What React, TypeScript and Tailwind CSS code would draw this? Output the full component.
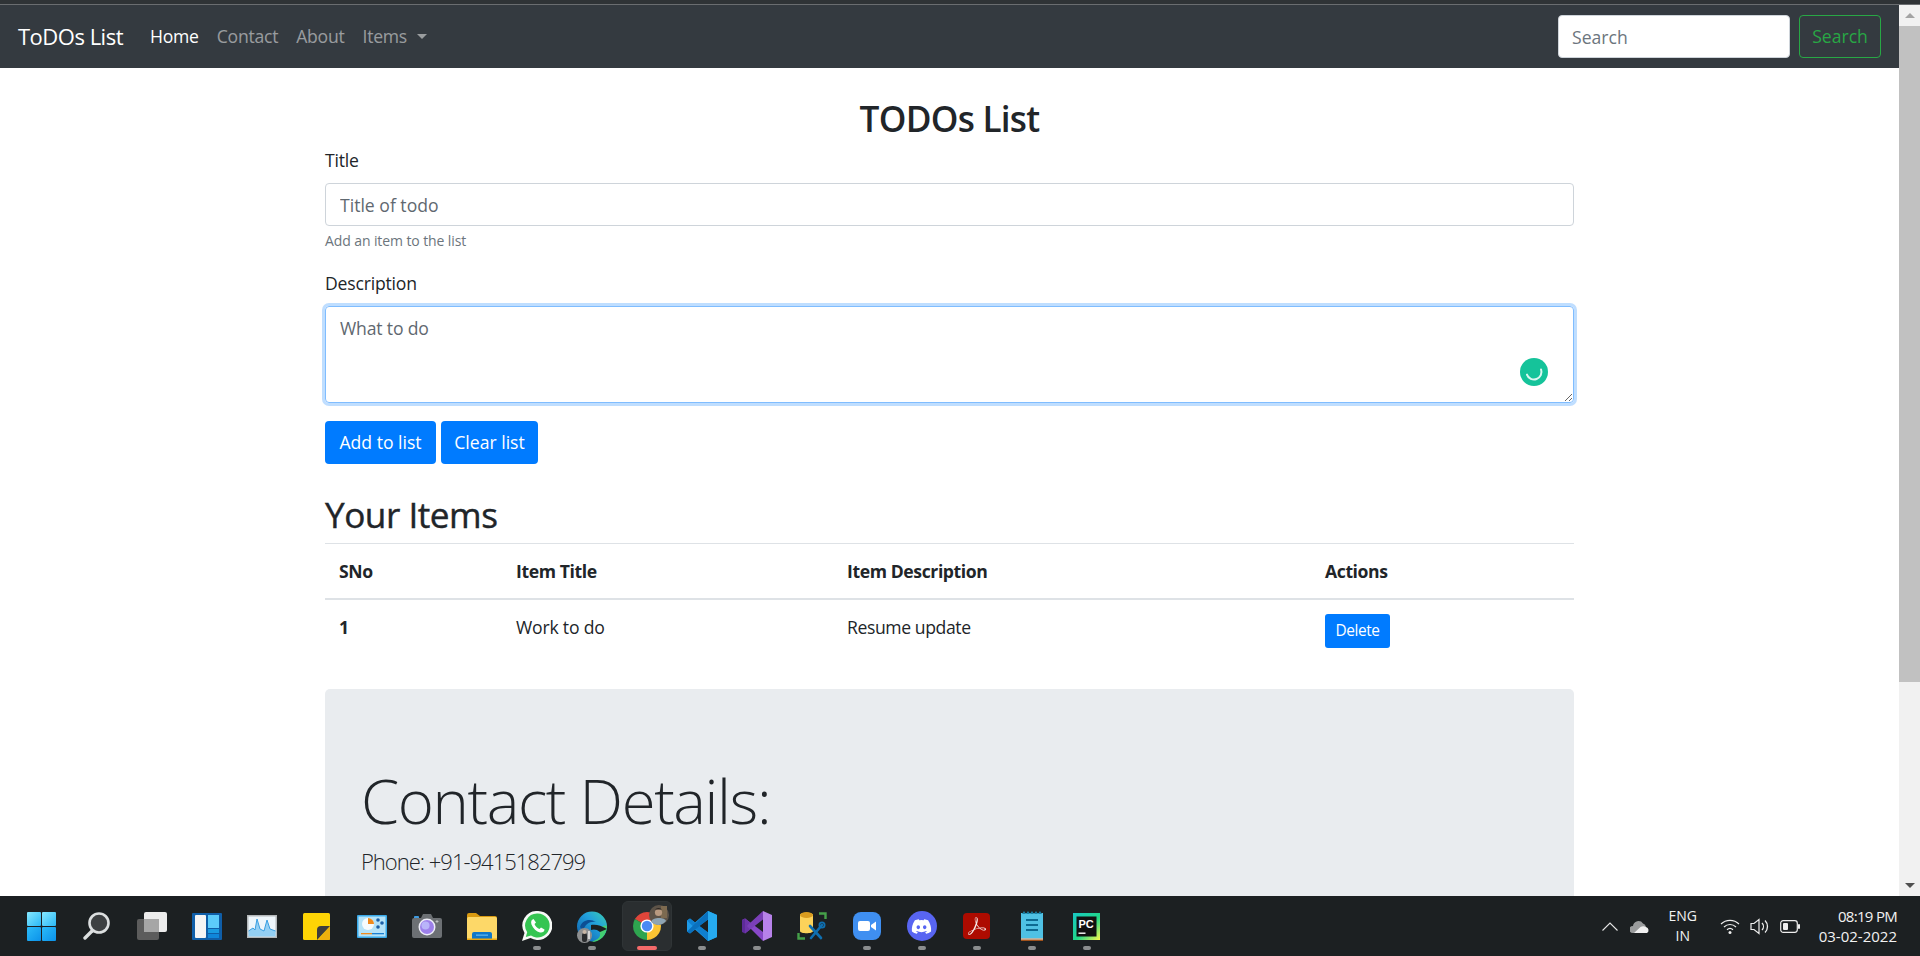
import type { ReactNode } from "react";
import { FaDiscord } from "react-icons/fa";
import { SiAdobeacrobatreader } from "react-icons/si";

const font = "font-['Open_Sans','Noto_Sans',sans-serif]";

function Slot({ children, dot, active }: { children: ReactNode; dot?: boolean; active?: boolean }) {
  return (
    <div className="relative flex h-[60px] w-[55px] items-center justify-center">
      {active && <span className="absolute left-[3px] top-[5px] h-[50px] w-[50px] rounded-md border border-[#2f3436] bg-[#2a2e30]" />}
      <div className="relative flex">{children}</div>
      {dot && <span className="absolute bottom-[6px] left-1/2 h-[4px] w-[8px] -translate-x-1/2 rounded-full bg-[#8b8d8e]" />}
      {active && <span className="absolute bottom-[6px] left-1/2 h-[4px] w-[20px] -translate-x-1/2 rounded-full bg-[#f56a6a]" />}
    </div>
  );
}

function Windows() {
  return (
    <svg width="29" height="29" viewBox="0 0 29 29">
      <defs>
        <linearGradient id="w1" x1="0" y1="0" x2="1" y2="1"><stop offset="0" stopColor="#86e8ff" /><stop offset="1" stopColor="#2ab8f6" /></linearGradient>
        <linearGradient id="w2" x1="0" y1="0" x2="1" y2="1"><stop offset="0" stopColor="#2bbbf8" /><stop offset="1" stopColor="#0b92ea" /></linearGradient>
      </defs>
      <rect width="14" height="14" rx="1" fill="url(#w1)" />
      <rect x="15" width="14" height="14" rx="1" fill="url(#w1)" />
      <rect y="15" width="14" height="14" rx="1" fill="url(#w2)" />
      <rect x="15" y="15" width="14" height="14" rx="1" fill="url(#w2)" />
    </svg>
  );
}

function SearchIcon() {
  return (
    <svg width="27" height="28" viewBox="0 0 27 28">
      <circle cx="16" cy="11" r="9.5" fill="#3d4042" stroke="#dcdfe0" strokeWidth="2.6" />
      <path d="M9 19 L2 26" stroke="#dcdfe0" strokeWidth="3.4" strokeLinecap="round" />
    </svg>
  );
}

function TaskView() {
  return (
    <svg width="30" height="28" viewBox="0 0 30 28">
      <rect x="7" y="0" width="23" height="20" rx="2" fill="#ececec" />
      <rect x="0" y="7" width="22" height="21" rx="2" fill="#5c5c5c" />
      <rect x="7" y="7" width="15" height="13" fill="#a6a6a6" />
    </svg>
  );
}

function Widgets() {
  return (
    <svg width="30" height="27" viewBox="0 0 30 27">
      <rect width="30" height="27" rx="1" fill="#0f5ea8" />
      <rect x="3" y="2" width="11" height="23" rx="1" fill="#f4f4f4" />
      <rect x="16" y="2" width="11" height="13" fill="#5ccbfa" />
      <rect x="16" y="16" width="11" height="4" fill="#199be2" />
      <rect x="16" y="21" width="11" height="4" fill="#0f86da" />
    </svg>
  );
}

function PerfMon() {
  return (
    <svg width="30" height="23" viewBox="0 0 30 23">
      <rect width="30" height="23" fill="#b4b8ba" />
      <rect x="1.5" y="1.5" width="27" height="20" fill="#eef6fb" />
      <path d="M1.5 16 L6 13 L8 15 L10 4 L13 14 L17 16 L20 5 L23 14 L28.5 16 V21.5 H1.5 Z" fill="#93cff3" />
      <path d="M1.5 16 L6 13 L8 15 L10 4 L13 14 L17 16 L20 5 L23 14 L28.5 16" fill="none" stroke="#3a9fe2" strokeWidth="1" />
    </svg>
  );
}

function Sticky() {
  return (
    <svg width="27" height="27" viewBox="0 0 27 27">
      <rect width="27" height="27" rx="1.5" fill="#fdd405" />
      <path d="M27 13 V25.5 A1.5 1.5 0 0 1 25.5 27 H15 Z" fill="#eeb00e" />
      <path d="M14 27 V17 A4 4 0 0 1 18 13 H27 L14 27 Z" fill="#3d3d3d" />
    </svg>
  );
}

function ControlPanel() {
  return (
    <svg width="30" height="23" viewBox="0 0 30 23">
      <rect width="30" height="23" rx="1" fill="#39a9e8" />
      <rect x="1.5" y="1.5" width="27" height="20" fill="#b4e2f8" />
      <circle cx="11" cy="9" r="6" fill="#f6fbfe" />
      <path d="M11 3 A6 6 0 0 1 17 9 H11 Z" fill="#f08a1d" />
      <circle cx="21" cy="5" r="1.8" fill="#1c5fa8" />
      <circle cx="25" cy="8" r="1.8" fill="#1c5fa8" />
      <circle cx="21" cy="12" r="1.8" fill="#1c5fa8" />
      <rect x="4" y="18" width="11" height="1.3" fill="#f08a1d" />
      <rect x="15" y="18" width="12" height="1.3" fill="#1c7fd1" />
    </svg>
  );
}

function Camera() {
  return (
    <svg width="30" height="24" viewBox="0 0 30 24">
      <rect x="2" y="2" width="5" height="3" rx="1" fill="#3e9be0" />
      <path d="M9 4 L11 0 H19 L21 4 H28 A2 2 0 0 1 30 6 V22 A2 2 0 0 1 28 24 H2 A2 2 0 0 1 0 22 V6 A2 2 0 0 1 2 4 Z" fill="#6c7074" />
      <circle cx="15" cy="13" r="8.5" fill="#eeeef8" />
      <circle cx="15" cy="13" r="7" fill="#9d80ea" />
      <circle cx="13.5" cy="11.5" r="4" fill="#b9b4f9" />
      <path d="M25 6 V9 M23.5 7.5 H26.5" stroke="#c9cbcd" strokeWidth="0.8" />
    </svg>
  );
}

function Folder() {
  return (
    <svg width="30" height="27" viewBox="0 0 30 27">
      <path d="M0 2 A2 2 0 0 1 2 0 H9 L13 3 H28 A2 2 0 0 1 30 5 V8 H0 Z" fill="#d99a11" />
      <rect y="4" width="30" height="23" rx="1.5" fill="#fdd868" />
      <path d="M5 27 V21 A2 2 0 0 1 7 19 H23 A2 2 0 0 1 25 21 V27 Z" fill="#0f77c9" />
      <rect x="9" y="21.5" width="12" height="1.3" fill="#5db5ef" />
      <rect y="25.5" width="30" height="1.5" fill="#e9a70f" />
    </svg>
  );
}

function Whatsapp() {
  return (
    <svg width="30" height="30" viewBox="0 0 30 30">
      <path d="M15.5 0 A14.5 14.5 0 1 1 8.5 27 L0 30 L2.5 22 A14.5 14.5 0 0 1 15.5 0 Z" fill="#f7f9f7" />
      <path d="M15.5 2.5 A12 12 0 1 1 9 24.5 L3.8 26 L5.2 21.2 A12 12 0 0 1 15.5 2.5 Z" fill="#35c552" />
      <path d="M11.5 8 C9.5 8.5 8.5 10.5 9.5 13.5 C11 17.5 14.5 20.5 18 21.5 C20.5 22 22.5 20.5 22.5 18.5 L19 16.5 L17.5 18 C15.5 17.5 13 15 12.5 13 L14 11.5 Z" fill="#fff" />
    </svg>
  );
}

function Edge() {
  return (
    <div className="relative h-[31px] w-[30px]">
      <svg width="30" height="31" viewBox="0 0 30 31">
        <defs>
          <linearGradient id="e1" x1="0" y1="1" x2="1" y2="0"><stop offset="0" stopColor="#0b5aa8" /><stop offset="0.6" stopColor="#22a0dc" /><stop offset="1" stopColor="#3bd0b0" /></linearGradient>
        </defs>
        <circle cx="15" cy="15.5" r="15" fill="url(#e1)" />
        <path d="M30 15 C30 24 23 31 15 31 C18 29 24 28 23 22 C22 18 26 13 30 15 Z" fill="#43cf72" />
        <path d="M14 14 C18 13 24 14 30 18 L23 21 C20 18 16 18 14 19 Z" fill="#1c2022" />
        <path d="M3 16 C5 9 13 7 19 11 C13 10 8 13 6 20 Z" fill="#0d4f94" />
      </svg>
      <svg width="15" height="15" viewBox="0 0 15 15" className="absolute -bottom-[1px] left-0">
        <circle cx="7.5" cy="7.5" r="7.5" fill="#8d8f90" />
        <rect x="5" y="5" width="5" height="9" rx="2" fill="#2a2c2e" />
        <circle cx="7.5" cy="4" r="2" fill="#c9b7a6" />
        <rect x="11" y="3" width="2" height="8" fill="#d5d5d5" />
      </svg>
    </div>
  );
}

function Chrome() {
  return (
    <div className="relative h-[28px] w-[28px]">
      <svg width="28" height="28" viewBox="0 0 28 28">
        <path d="M14 14 L1.88 7 A14 14 0 0 1 26.12 7 Z" fill="#e0453a" />
        <path d="M14 14 L26.12 7 A14 14 0 0 1 14 28 Z" fill="#fbc433" />
        <path d="M14 14 L14 28 A14 14 0 0 1 1.88 7 Z" fill="#2ea44f" />
        <circle cx="14" cy="14" r="6.6" fill="#fff" />
        <circle cx="14" cy="14" r="5.2" fill="#4a8af4" />
      </svg>
      <svg width="20" height="20" viewBox="0 0 20 20" className="absolute -right-[8px] -top-[7px]">
        <circle cx="10" cy="10" r="10" fill="#5d5348" />
        <rect x="12" y="1" width="6" height="12" fill="#7d6a50" />
        <circle cx="9.5" cy="7.5" r="3.6" fill="#b99a80" />
        <path d="M6 4.5 A4 3 0 0 1 13 4.5 Z" fill="#2c2622" />
        <path d="M2 17 C3 12 16 12 17 16 A10 10 0 0 1 2 17 Z" fill="#8ea4b3" />
      </svg>
    </div>
  );
}

function VsCode() {
  return (
    <svg width="30" height="30" viewBox="0 0 30 30">
      <path d="M21 30 L8 18.5 L3 22.5 L0 20.5 V9.5 L3 7.5 L8 11.5 L21 0 L30 4 V26 Z M21 8.5 L12 15 L21 21.5 Z" fill="#1e9be8" />
      <path d="M21 0 L30 4 V26 L21 30 Z" fill="#26aaef" />
      <path d="M0 9.5 L3 7.5 L21 21.5 V30 Z" fill="#0f7fcf" />
      <path d="M0 20.5 L21 0 V8.5 L3 22.5 Z" fill="#0a70bd" />
    </svg>
  );
}

function VisualStudio() {
  return (
    <svg width="30" height="30" viewBox="0 0 30 30">
      <path d="M21 0 L30 4 V26 L21 30 Z" fill="#b782ea" />
      <path d="M0 9 L3 7.5 L21 21 V30 Z" fill="#8848c8" />
      <path d="M3 22.5 L21 8.5 V0 L8 12 L3 7.5 Z" fill="#7a3fb8" />
      <path d="M0 9 L3 7.5 V22.5 L0 21 Z" fill="#5d2b99" />
      <path d="M3 7.5 L8 11.5 L5 15 L8 18.5 L3 22.5 Z" fill="#6d34aa" />
    </svg>
  );
}

function DbTool() {
  return (
    <svg width="30" height="28" viewBox="0 0 30 28">
      <path d="M3 3 C3 0 16 0 16 3 V19 C16 22 3 22 3 19 Z" fill="#fcd25a" />
      <ellipse cx="9.5" cy="3" rx="6.5" ry="3" fill="#d99c1f" />
      <path d="M22 1.5 H28.5 V7 M1.5 21 V26.5 H8" fill="none" stroke="#45a049" strokeWidth="2.4" />
      <path d="M13 14 L24 26 M25 13 L14 26" stroke="#0f6fb0" strokeWidth="2.6" strokeLinecap="round" />
      <circle cx="25" cy="13" r="2.6" fill="none" stroke="#0f6fb0" strokeWidth="1.8" />
    </svg>
  );
}

function ZoomApp() {
  return (
    <svg width="28" height="28" viewBox="0 0 28 28">
      <rect width="28" height="28" rx="8" fill="#3f8ff1" />
      <rect x="5" y="9" width="12" height="10" rx="2" fill="#fff" />
      <path d="M18 13 L23 9.5 V18.5 L18 15 Z" fill="#fff" />
    </svg>
  );
}

function Discord() {
  return (
    <div className="flex h-[30px] w-[30px] items-center justify-center rounded-full bg-[#5865f2] text-white">
      <FaDiscord size={21} />
    </div>
  );
}

function Acrobat() {
  return (
    <div className="flex h-[26px] w-[27px] items-center justify-center rounded-[4px] bg-[#ad0b00] text-[#f6ecea]">
      <SiAdobeacrobatreader size={18} />
    </div>
  );
}

function Notepad() {
  return (
    <svg width="22" height="30" viewBox="0 0 22 30">
      <rect y="2" width="22" height="28" fill="#a0521c" />
      <rect y="2" width="22" height="25.5" fill="#4fc1e4" />
      <rect y="27.5" width="22" height="1" fill="#f0e6da" />
      <path d="M1 3 L3 0 L5 3 L7 0 L9 3 L11 0 L13 3 L15 0 L17 3 L19 0 L21 3 Z" fill="#1b7fa3" />
      <rect x="5" y="8" width="12" height="2" fill="#0d6a92" />
      <rect x="5" y="13" width="12" height="2" fill="#0d6a92" />
      <rect x="5" y="18" width="12" height="2" fill="#0d6a92" />
    </svg>
  );
}

function PyCharm() {
  return (
    <svg width="27" height="27" viewBox="0 0 27 27">
      <defs>
        <linearGradient id="pc" x1="0" y1="0" x2="1" y2="1"><stop offset="0" stopColor="#18c8c4" /><stop offset="0.55" stopColor="#21d789" /><stop offset="1" stopColor="#fcf84a" /></linearGradient>
      </defs>
      <rect width="27" height="27" fill="url(#pc)" />
      <rect x="3.5" y="3.5" width="20" height="20" fill="#111" />
      <rect x="5.5" y="19.5" width="7" height="1.4" fill="#fff" />
      <text x="5.5" y="14.5" fontSize="11" fontWeight="700" fill="#fff" fontFamily="Liberation Sans, sans-serif">PC</text>
    </svg>
  );
}

function Taskbar() {
  return (
    <div className={`flex h-[60px] shrink-0 items-center bg-[#1c2022] pl-[14px] ${font}`}>
      <div className="flex">
        <Slot><Windows /></Slot>
        <Slot><SearchIcon /></Slot>
        <Slot><TaskView /></Slot>
        <Slot><Widgets /></Slot>
        <Slot><PerfMon /></Slot>
        <Slot><Sticky /></Slot>
        <Slot><ControlPanel /></Slot>
        <Slot><Camera /></Slot>
        <Slot><Folder /></Slot>
        <Slot dot><Whatsapp /></Slot>
        <Slot dot><Edge /></Slot>
        <Slot active><Chrome /></Slot>
        <Slot dot><VsCode /></Slot>
        <Slot dot><VisualStudio /></Slot>
        <Slot><DbTool /></Slot>
        <Slot dot><ZoomApp /></Slot>
        <Slot dot><Discord /></Slot>
        <Slot dot><Acrobat /></Slot>
        <Slot dot><Notepad /></Slot>
        <Slot dot><PyCharm /></Slot>
      </div>
      <div className="ml-auto flex items-center pr-[23px] text-[#f2f2f2]">
        <svg width="16" height="9" viewBox="0 0 16 9" className="mr-[12px]">
          <path d="M0.5 8.5 L8 1 L15.5 8.5" fill="none" stroke="#e6e6e6" strokeWidth="1.1" />
        </svg>
        <svg width="20" height="13" viewBox="0 0 20 13" className="mr-[18px]">
          <path d="M3 13 A3.4 3.4 0 0 1 3 6 A5.5 5.5 0 0 1 13 3.5 A4.5 4.5 0 0 1 16 7 L7 13 Z" fill="#9a9c9d" />
          <path d="M4 13 L10.5 7 A5.5 5.5 0 0 1 16 7 A3.3 3.3 0 0 1 17 13 Z" fill="#f0f0f0" />
        </svg>
        <div className="mr-[22px] flex w-[30px] flex-col items-center text-[14px] leading-[20px]">
          <span>ENG</span>
          <span>IN</span>
        </div>
        <svg width="20" height="15" viewBox="0 0 20 15" className="mr-[10px]">
          <path d="M1 5 A13 13 0 0 1 19 5 M4 8 A8.5 8.5 0 0 1 16 8 M7 10.8 A4.4 4.4 0 0 1 13 10.8" fill="none" stroke="#eeeeee" strokeWidth="1.2" />
          <circle cx="10" cy="13.4" r="1.5" fill="#eeeeee" />
        </svg>
        <svg width="20" height="17" viewBox="0 0 20 17" className="mr-[10px]">
          <path d="M1 5.5 H4 L9 1.5 V15.5 L4 11.5 H1 Z" fill="none" stroke="#eeeeee" strokeWidth="1.2" />
          <path d="M12 5 A5 5 0 0 1 12 12 M15 2.5 A8.5 8.5 0 0 1 15 14.5" fill="none" stroke="#eeeeee" strokeWidth="1.3" />
        </svg>
        <svg width="20" height="13" viewBox="0 0 20 13" className="mr-[19px]">
          <rect x="0.7" y="0.7" width="16.6" height="11.6" rx="2.5" fill="none" stroke="#eeeeee" strokeWidth="1.2" />
          <rect x="3" y="3" width="5" height="7" rx="1" fill="#eeeeee" />
          <rect x="18" y="4" width="2" height="5" rx="1" fill="#eeeeee" />
        </svg>
        <div className="flex flex-col items-end text-[15px] leading-[20px]">
          <span className="tracking-[-0.7px]">08:19 PM</span>
          <span>03-02-2022</span>
        </div>
      </div>
    </div>
  );
}

function Navbar() {
  return (
    <nav className="flex h-[63px] shrink-0 items-center bg-[#343a40] px-[18px]">
      <span className="mr-[27px] text-[22px] tracking-[-0.5px] text-white">ToDOs List</span>
      <div className="flex items-center gap-[18px] text-[17.6px] tracking-[-0.25px] text-white/50">
        <span className="text-white">Home</span>
        <span>Contact</span>
        <span>About</span>
        <span className="flex items-center gap-[10px]">
          Items
          <span className="mt-[1px] h-0 w-0 border-x-[5px] border-t-[5px] border-x-transparent border-t-[#9a9d9f]" />
        </span>
      </div>
      <div className="ml-auto flex items-center gap-[9px]">
        <input
          placeholder="Search"
          className="h-[43px] w-[232px] rounded-[4px] border border-[#ced4da] bg-white px-[13px] text-[17.6px] text-[#495057] outline-none placeholder:text-[#6c757d]"
        />
        <button className="h-[43px] w-[82px] rounded-[4px] border border-[#28a745] text-[17.6px] text-[#28a745]">Search</button>
      </div>
    </nav>
  );
}

function Scrollbar() {
  return (
    <div className="flex w-[21px] shrink-0 flex-col bg-[#f1f1f1]">
      <div className="flex h-[21px] items-center justify-center">
        <span className="h-0 w-0 border-x-[5px] border-b-[5px] border-x-transparent border-b-[#a3a3a3]" />
      </div>
      <div className="h-[656px] bg-[#c1c1c1]" />
      <div className="flex-1" />
      <div className="flex h-[21px] items-center justify-center">
        <span className="h-0 w-0 border-x-[5px] border-t-[5px] border-x-transparent border-t-[#505050]" />
      </div>
    </div>
  );
}

function Content() {
  return (
    <main className="mx-auto w-[1249px] shrink-0 text-[17.6px] tracking-[-0.2px] text-[#212529]">
      <h2 className="mt-[29px] text-center text-[35.2px] font-semibold leading-[42px] tracking-[-0.75px]">TODOs List</h2>
      <label className="mt-[8px] block leading-[26px]">Title</label>
      <input
        placeholder="Title of todo"
        className="mt-[10px] block h-[43px] w-full rounded-[4px] border border-[#ced4da] px-[14px] text-[17.6px] tracking-normal outline-none placeholder:text-[#5f6870]"
      />
      <p className="mt-[4px] text-[14px] leading-[22px] tracking-[-0.1px] text-[#6c757d]">Add an item to the list</p>
      <label className="mt-[18px] block leading-[26px]">Description</label>
      <textarea
        placeholder="What to do"
        className="mt-[10px] block h-[97px] w-full rounded-[4px] border border-[#80bdff] px-[14px] py-[8px] text-[17.6px] tracking-[-0.17px] shadow-[0_0_0_3px_rgba(0,123,255,0.25)] outline-none placeholder:text-[#5f6870]"
      />
      <div className="relative">
        <svg width="28" height="28" viewBox="0 0 28 28" className="absolute -top-[45px] right-[26px]">
          <circle cx="14" cy="14" r="14" fill="#15c39a" />
          <path d="M6.5 14 A7.5 7.5 0 0 0 21.5 14" transform="rotate(-20 14 14)" fill="none" stroke="#fff" strokeOpacity="0.85" strokeWidth="2" strokeLinecap="round" />
        </svg>
      </div>
      <div className="mt-[18px] flex gap-[5px]">
        <button className="h-[43px] w-[111px] rounded-[4px] bg-[#007bff] tracking-normal text-white">Add to list</button>
        <button className="h-[43px] w-[97px] rounded-[4px] bg-[#007bff] tracking-normal text-white">Clear list</button>
      </div>
      <h2 className="mt-[29px] text-[35.2px] font-medium leading-[42px] tracking-[-0.5px] [-webkit-text-stroke:0.4px_#212529]">Your Items</h2>
      <table className="mt-[8px] w-full table-fixed border-collapse">
        <thead>
          <tr className="border-y border-[#dee2e6] text-left tracking-[-0.4px]">
            <th className="h-[55px] w-[179px] border-b-2 border-[#dee2e6] px-[14px] font-bold">SNo</th>
            <th className="w-[331px] border-b-2 border-[#dee2e6] px-[12px] font-bold">Item Title</th>
            <th className="w-[478px] border-b-2 border-[#dee2e6] px-[12px] font-bold">Item Description</th>
            <th className="border-b-2 border-[#dee2e6] px-[12px] font-bold">Actions</th>
          </tr>
        </thead>
        <tbody>
          <tr>
            <th className="h-[57px] px-[14px] text-left font-bold">1</th>
            <td className="px-[12px]">Work to do</td>
            <td className="px-[12px] tracking-[-0.4px]">Resume update</td>
            <td className="px-[12px]">
              <button className="mt-[6px] h-[34px] w-[65px] rounded-[3px] bg-[#007bff] text-[15.4px] tracking-[-0.4px] text-white">Delete</button>
            </td>
          </tr>
        </tbody>
      </table>
      <section className="mt-[33px] h-[260px] rounded-t-[5px] bg-[#e9ecef] px-[36px] pt-[75px]">
        <h1 className="text-[61.6px] font-light leading-[72px] tracking-[-1.4px]">Contact Details:</h1>
        <p className="mt-[10px] text-[22px] font-light leading-[30px] tracking-[-1px]">Phone: +91-9415182799</p>
      </section>
    </main>
  );
}

export default function App() {
  return (
    <div className={`flex h-[956px] w-[1920px] flex-col overflow-hidden bg-white ${font}`}>
      <div className="h-[5px] shrink-0 border-b border-[#6a6d70] bg-[#2f3336]" />
      <div className="flex min-h-0 flex-1">
        <div className="flex min-w-0 flex-1 flex-col overflow-hidden">
          <Navbar />
          <Content />
        </div>
        <Scrollbar />
      </div>
      <Taskbar />
    </div>
  );
}
